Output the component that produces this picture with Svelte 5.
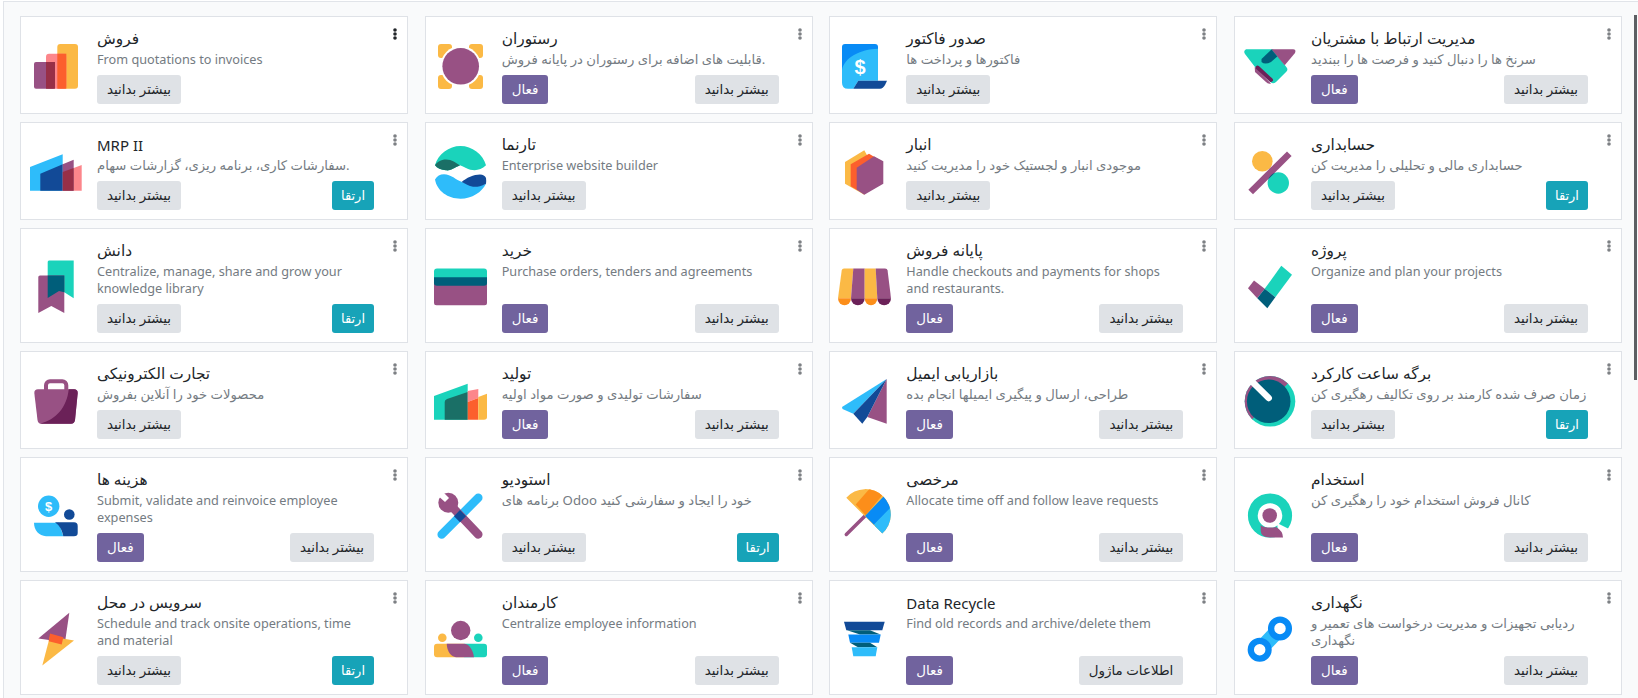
<script>
  const M = { t: 'بیشتر بدانید', k: 'more' };
  const A = { t: 'فعال', k: 'active' };
  const U = { t: 'ارتقا', k: 'up' };
  const I = { t: 'اطلاعات ماژول', k: 'more' };
  const apps = [
    { i: 'sales', n: 'فروش', d: 'From quotations to invoices', b: [M], hot: true },
    { i: 'rest', n: 'رستوران', d: 'قابلیت های اضافه برای رستوران در پایانه فروش.', b: [A, M] },
    { i: 'inv', n: 'صدور فاکتور', d: 'فاکتورها و پرداخت ها', b: [M] },
    { i: 'crm', n: 'مدیریت ارتباط با مشتریان', d: 'سرنخ ها را دنبال کنید و فرصت ها را ببندید', b: [A, M] },
    { i: 'mrp2', n: 'MRP II', d: 'سفارشات کاری، برنامه ریزی، گزارشات سهام.', b: [M, U] },
    { i: 'web', n: 'تارنما', d: 'Enterprise website builder', b: [M] },
    { i: 'stock', n: 'انبار', d: 'موجودی انبار و لجستیک خود را مدیریت کنید', b: [M] },
    { i: 'acc', n: 'حسابداری', d: 'حسابداری مالی و تحلیلی را مدیریت کن', b: [M, U] },
    { i: 'know', n: 'دانش', d: 'Centralize, manage, share and grow your knowledge library', b: [M, U] },
    { i: 'buy', n: 'خرید', d: 'Purchase orders, tenders and agreements', b: [A, M] },
    { i: 'pos', n: 'پایانه فروش', d: 'Handle checkouts and payments for shops and restaurants.', b: [A, M] },
    { i: 'proj', n: 'پروژه', d: 'Organize and plan your projects', b: [A, M] },
    { i: 'shop', n: 'تجارت الکترونیکی', d: 'محصولات خود را آنلاین بفروش', b: [M] },
    { i: 'mrp', n: 'تولید', d: 'سفارشات تولیدی و صورت مواد اولیه', b: [A, M] },
    { i: 'mail', n: 'بازاریابی ایمیل', d: 'طراحی، ارسال و پیگیری ایمیلها انجام بده', b: [A, M] },
    { i: 'time', n: 'برگه ساعت کارکرد', d: 'زمان صرف شده کارمند بر روی تکالیف رهگیری کن', b: [M, U] },
    { i: 'exp', n: 'هزینه ها', d: 'Submit, validate and reinvoice employee expenses', b: [A, M] },
    { i: 'studio', n: 'استودیو', d: 'برنامه های Odoo خود را ایجاد و سفارشی کنید', b: [M, U] },
    { i: 'off', n: 'مرخصی', d: 'Allocate time off and follow leave requests', b: [A, M] },
    { i: 'hire', n: 'استخدام', d: 'کانال فروش استخدام خود را رهگیری کن', b: [A, M] },
    { i: 'field', n: 'سرویس در محل', d: 'Schedule and track onsite operations, time and material', b: [M, U] },
    { i: 'emp', n: 'کارمندان', d: 'Centralize employee information', b: [A, M] },
    { i: 'recycle', n: 'Data Recycle', d: 'Find old records and archive/delete them', b: [A, I] },
    { i: 'maint', n: 'نگهداری', d: 'ردیابی تجهیزات و مدیریت درخواست های تعمیر و نگهداری', b: [A, M] }
  ];
  const fa = (s) => /[\u0600-\u06FF]/.test(s);
</script>

<div class="page">
  <div class="grid">
    {#each apps as a}
      <article class="card">
        <svg class="logo" viewBox="0 0 70 70" width="70" height="70">
          {#if a.i === 'sales'}
            <rect x="36.3" y="12" width="20.7" height="44.7" rx="3" fill="#FBB945" />
            <rect x="25" y="21.7" width="20.3" height="35" rx="3" fill="#FC868B" />
            <rect x="36.3" y="21.7" width="9" height="35" fill="#FC5F2D" />
            <rect x="13" y="30" width="21" height="26.7" rx="2" fill="#985184" />
            <rect x="25" y="30" width="9" height="26.7" fill="#982F47" />
          {:else if a.i === 'rest'}
            <rect x="12" y="12" width="14" height="14" rx="3" fill="#FBB945" />
            <rect x="43" y="12" width="14" height="14" rx="3" fill="#FBB945" />
            <rect x="12" y="43" width="14" height="14" rx="3" fill="#FBB945" />
            <rect x="43" y="43" width="14" height="14" rx="3" fill="#FBB945" />
            <circle cx="34.7" cy="34.3" r="20.3" fill="#fff" />
            <circle cx="34.7" cy="34.3" r="18.3" fill="#985184" />
          {:else if a.i === 'inv'}
            <rect x="12" y="12" width="36" height="30" rx="3" fill="#088BF5" />
            <path d="M12 38C14 26 30 17 48 16.7V48.7H28.3L23.3 56.7H18Q12 56.7 12 50.7Z" fill="#2EBCFA" />
            <path d="M28.3 48.7H57L55 53Q53 56.7 50 56.7H23.3Z" fill="#124A97" />
            <text x="30" y="41.8" class="dollar" font-size="20">$</text>
          {:else if a.i === 'crm'}
            <path d="M11 17.3H38L52 36Q53 38 51.5 39.5L41 50Q38 52.5 35.5 50L20 35L10 22Q8 19 11 17.3Z" fill="#1AD3BB" />
            <path d="M36.3 17.3H58Q61.5 17.3 60 21L49.7 33.3Z" fill="#985184" />
            <path d="M26.5 27L36.5 17.5L42.3 24.5L36 30Q30 33 26.5 30Z" fill="#005E7A" />
            <path d="M19.7 35L36 51.5Q33 52.5 31 50L20 40Z" fill="#985184" />
            <path d="M22.5 35.5L36 48" stroke="#6B2158" stroke-width="4" stroke-linecap="round" />
          {:else if a.i === 'mrp2'}
            <path d="M9 29L41.7 16.3V52.7H9Z" fill="#2EBCFA" />
            <path d="M19.3 35.7L41.7 26.3V52.7H19.3Z" fill="#124A97" />
            <path d="M41.7 26.3L52.7 21.7V52.7H41.7Z" fill="#985184" />
            <path d="M52.7 30L60.7 27V52.7H52.7Z" fill="#FC868B" />
            <path d="M41.7 34L52.7 30V52.7H41.7Z" fill="#982F47" />
          {:else if a.i === 'web'}
            <path d="M9 27.3C12 16 23 8 34.5 8C46 8 57 16 60 27.3C54 33 47 33.5 40 30C37 28.5 35.5 28 34 27.3C28 30 24 33 20 32.3C15 32 11 30 9 27.3Z" fill="#1AD3BB" />
            <path d="M9 27.3C11 24 15 21.5 20 21.5C26 21.5 30 25 34 27.3C28 30 24 33 20 32.3C15 32 11 30 9 27.3Z" fill="#1A6F66" />
            <path d="M9 41.5C11 38 14 36.3 18 36.3C25 36.3 30 42 36 44C42 46 50 49 60 45.7C56 54 46 60.7 34.5 60.7C22 60.7 11 53 9 41.5Z" fill="#2EBCFA" />
            <path d="M35.7 44C40 40 48 36.5 54 36.5C57 36.5 59 38 60 40C60.3 42 60.3 44 60 45.7C54 49 50 49 47 48.7C43 48 39 45.5 35.7 44Z" fill="#124A97" />
          {:else if a.i === 'stock'}
            <path d="M34.3 12.3L15 24V45.7L34.3 56.7L44 30Z" fill="#FBB945" />
            <path d="M20.7 26.3L39 15.7L53 24L26.7 51.7L20.7 48.3Z" fill="#FC5F2D" />
            <path d="M44 18.3L53.3 23.3V45.7L34.3 56.7L26.7 51.7V29.7Z" fill="#985184" />
          {:else if a.i === 'acc'}
            <defs><clipPath id="acc-bar"><path d="M13.4 51.7L52 13.4L56.6 18L18 56.3Z" /></clipPath></defs>
            <circle cx="27.3" cy="23.3" r="10.3" fill="#FBB945" />
            <circle cx="43.3" cy="45" r="10.7" fill="#1AD3BB" />
            <path d="M13.4 51.7L52 13.4L56.6 18L18 56.3Z" fill="#985184" />
            <circle cx="27.3" cy="23.3" r="10.3" fill="#982F47" clip-path="url(#acc-bar)" />
            <circle cx="43.3" cy="45" r="10.7" fill="#005E7A" clip-path="url(#acc-bar)" />
          {:else if a.i === 'know'}
            <path d="M28 8.5H52.7V46.2L43.3 40.3L26.7 46V10Q26.7 8.5 28 8.5Z" fill="#1AD3BB" />
            <path d="M19 23.5H43.3V61L30.3 54L17.3 61V25Q17.3 23.5 19 23.5Z" fill="#985184" />
            <path d="M26.7 23.5H43.3V40.3L38 39L26.7 46Z" fill="#005E7A" />
          {:else if a.i === 'buy'}
            <rect x="8" y="28" width="53" height="25.2" rx="2.5" fill="#985184" />
            <rect x="8" y="16.5" width="53" height="12" rx="3" fill="#1AD3BB" />
            <path d="M8 25.2H61V31Q61 33.8 58 33.8H11Q8 33.8 8 31Z" fill="#005E7A" />
          {:else if a.i === 'pos'}
            <path d="M14 16.5H23.3L21 46.2H8L11.7 18.5Q12 16.5 14 16.5Z" fill="#FBB945" />
            <path d="M23.3 16.5H34.7V46.2H21Z" fill="#985184" />
            <path d="M34.7 16.5H45.7L47.3 46.2H34.7Z" fill="#FBB945" />
            <path d="M45.7 16.5H55Q57.3 16.5 57.6 18.5L61 46.2H47.3Z" fill="#985184" />
            <path d="M8 46.2H21A6.5 7 0 0 1 8 46.2Z" fill="#FC8E1A" />
            <path d="M21 46.2H34.7A6.85 7 0 0 1 21 46.2Z" fill="#6B2158" />
            <path d="M34.7 46.2H47.3A6.3 7 0 0 1 34.7 46.2Z" fill="#FC8E1A" />
            <path d="M47.3 46.2H61A6.85 7 0 0 1 47.3 46.2Z" fill="#6B2158" />
          {:else if a.i === 'proj'}
            <path d="M29.7 36.8L46.3 13.8L57 22.8L40.3 45.2Z" fill="#1AD3BB" />
            <path d="M13 36.2L19 28.5L29.7 36.8L22.3 46.2Z" fill="#985184" />
            <path d="M29.7 36.8L40.3 45.2L32.3 56.2L22.3 46.2Z" fill="#005E7A" />
          {:else if a.i === 'shop'}
            <rect x="25" y="14.3" width="20.3" height="13" rx="4" fill="none" stroke="#985184" stroke-width="4" />
            <path d="M17 22.3H53Q56.7 22.3 56.7 26L54 53Q53.5 56.7 50 56.7H20Q17 56.7 16.5 53L13.3 26Q13.3 22.3 17 22.3Z" fill="#985184" />
            <path d="M47.7 22.3H53Q56.7 22.3 56.7 26L54 53Q53.5 56.7 50 56.7H19C35 53 46 40 47.7 22.3Z" fill="#6B2158" />
          {:else if a.i === 'mrp'}
            <path d="M8 29L41.7 16.7V52.7H8Z" fill="#1AD3BB" />
            <path d="M18.7 35Q18.7 33 21 32L41.7 25V52.7H18.7Z" fill="#1A6F66" />
            <path d="M41.7 24L52.3 22V31L41.7 35Z" fill="#FC868B" />
            <path d="M41.7 35L52.3 31V52.7H41.7Z" fill="#FC5F2D" />
            <path d="M52.3 30L61 26.7V50Q61 52.7 58 52.7H52.3Z" fill="#FBB945" />
          {:else if a.i === 'mail'}
            <path d="M12 40L56.7 12L23.3 46.7L12.5 42Z" fill="#2EBCFA" />
            <path d="M37.3 50L56.7 12V56.7Z" fill="#985184" />
            <path d="M23.3 46.7L56.7 12L37.3 50L32.3 56.7Z" fill="#124A97" />
          {:else if a.i === 'time'}
            <circle cx="35" cy="34.3" r="25.3" fill="#1AD3BB" />
            <path d="M52.9 16.4A25.3 25.3 0 0 0 17.1 52.2Z" fill="#985184" />
            <circle cx="33.7" cy="34.3" r="21.8" fill="#005E7A" />
            <path d="M19 16.5L33.7 31" stroke="#fff" stroke-width="6.5" stroke-linecap="round" />
          {:else if a.i === 'exp'}
            <circle cx="27.7" cy="25.2" r="10.7" fill="#2EBCFA" />
            <text x="27.7" y="30" class="dollar" font-size="13">$</text>
            <circle cx="48.3" cy="33.5" r="5.3" fill="#124A97" />
            <path d="M13 41.8H38L42.3 55.2H25C18 55.2 13 49 13 41.8Z" fill="#2EBCFA" />
            <path d="M34 41.3H53Q56.7 41.3 56.7 45V52Q56.7 55.2 53 55.2H42.3C41 49 39 45 34 41.3Z" fill="#124A97" />
          {:else if a.i === 'studio'}
            <path d="M15.7 53.5L52.3 16.8" stroke="#2EBCFA" stroke-width="8.5" stroke-linecap="round" />
            <path d="M52.3 53.5L22.3 21.8" stroke="#985184" stroke-width="8.5" stroke-linecap="round" />
            <circle cx="22.3" cy="21.8" r="10" fill="#985184" />
            <path d="M14.5 8.5L23 17L19 21L10 13Z" fill="#fff" />
            <path d="M34 29L40 35.2L34 41.2L28 35.2Z" fill="#124A97" />
          {:else if a.i === 'off'}
            <defs><clipPath id="off-can"><path d="M16.3 16.8A25.4 25.4 0 1 1 52.3 52.5Z" /></clipPath></defs>
            <path d="M16.3 53.5L35.7 34.2" stroke="#985184" stroke-width="3.5" stroke-linecap="round" />
            <g clip-path="url(#off-can)">
              <rect x="10" y="5" width="55" height="55" fill="#FBB945" />
              <path d="M25.7 23.5L42 5H60L35.7 34.2Z" fill="#FC8E1A" />
              <path d="M35 35L55 14L64 24L44 44Z" fill="#088BF5" />
              <path d="M44 43.5L62 25L70 40L52 60Z" fill="#2EBCFA" />
            </g>
          {:else if a.i === 'hire'}
            <circle cx="35" cy="34.5" r="17.2" fill="none" stroke="#1AD3BB" stroke-width="9.8" />
            <path d="M42 42L58 50L50 60L44 58Z" fill="#fff" />
            <circle cx="34.7" cy="34.5" r="7.3" fill="#985184" />
            <path d="M25.7 44C28 47 38 47 41 46Q48 50 48 56.5H35Q26 56 25.7 50Z" fill="#985184" />
          {:else if a.i === 'field'}
            <path d="M48.3 8.8L17.3 34.5L44 38.2Z" fill="#985184" />
            <path d="M53 36.5L21.3 61.5L29 32.2Z" fill="#FBB945" />
            <path d="M29 29.5L42.3 33.2L40.7 40.5L27.7 37.2Z" fill="#FC5F2D" />
          {:else if a.i === 'emp'}
            <circle cx="34.7" cy="26.5" r="9.7" fill="#985184" />
            <circle cx="16.3" cy="33.8" r="4.3" fill="#FBB945" />
            <circle cx="52.3" cy="33.8" r="4.3" fill="#1AD3BB" />
            <path d="M11 39.8H38V53.2H11Q8 53.2 8 50.2V42.8Q8 39.8 11 39.8Z" fill="#FBB945" />
            <path d="M38 39.8H58Q61 39.8 61 42.8V50.2Q61 53.2 58 53.2H38Z" fill="#1AD3BB" />
            <path d="M20.7 39.8H38C43 39.8 47 46 48 53.2H30C25 53.2 21 47 20.7 39.8Z" fill="#985184" />
          {:else if a.i === 'recycle'}
            <path d="M14 17.8H54.7L52.3 26.2H16.3Z" fill="#124A97" />
            <path d="M17 26.2H40L50.5 30.5H30Z" fill="#005E7A" />
            <path d="M18.3 30.5H50.7L49 38.8H20Z" fill="#088BF5" />
            <path d="M20 38.8H40L47.3 43.2H28Z" fill="#005E7A" />
            <path d="M21.7 43.2H47.3L45.7 52.2H23.3Z" fill="#2EBCFA" />
          {:else if a.i === 'maint'}
            <path d="M24.7 45.8L45 24.5" stroke="#2EBCFA" stroke-width="15" />
            <circle cx="45" cy="24.5" r="8.9" fill="#fff" stroke="#088BF5" stroke-width="6.3" />
            <circle cx="24.7" cy="45.8" r="8.9" fill="#fff" stroke="#088BF5" stroke-width="6.3" />
          {/if}
        </svg>
        <div class="body">
          <h4 class:fa={fa(a.n)}>{a.n}</h4>
          <p class:fa={fa(a.d)}>{a.d}</p>
          <div class="actions">
            {#each a.b as b}
              <button class={b.k}>{b.t}</button>
            {/each}
          </div>
        </div>
        <svg class="kebab" class:hot={a.hot} viewBox="0 0 4 12" width="4" height="12">
          <circle cx="2" cy="2" r="1.8" /><circle cx="2" cy="6" r="1.8" /><circle cx="2" cy="10" r="1.8" />
        </svg>
      </article>
    {/each}
  </div>
  <div class="thumb"></div>
</div>

<style>
  :global(body) { background: #fff; overflow: hidden; }
  .page {
    position: relative;
    box-sizing: border-box;
    height: 697px;
    margin: 1px 0 0 3px;
    padding: 14px 0 0 16px;
    border-top: 1px solid #e1e4e9;
    border-left: 1px solid #e1e4e9;
    background: #f9fafb;
    overflow: hidden;
  }
  .grid {
    display: grid;
    grid-template-columns: repeat(4, 388px);
    column-gap: 16.67px;
    row-gap: 8px;
    align-items: stretch;
  }
  .card {
    position: relative;
    display: flex;
    align-items: center;
    box-sizing: border-box;
    padding: 12px 33px 9px 0;
    background: #fff;
    border: 1px solid #dfe2e7;
    font-family: "Noto Sans", "DejaVu Sans", sans-serif;
  }
  .logo { flex: 0 0 70px; margin-right: 6px; }
  .body {
    flex: 1;
    min-width: 0;
    align-self: stretch;
    display: flex;
    flex-direction: column;
  }
  h4 {
    margin: 0 0 2px;
    font-size: 15px;
    line-height: 20px;
    font-weight: 400;
    color: #212529;
  }
  h4.fa { font-size: 15.4px; }
  p {
    margin: 0 0 7px;
    font-size: 12.7px;
    line-height: 17px;
    color: #747b82;
  }
  p.fa { font-size: 13.2px; }
  .actions {
    margin-top: auto;
    display: flex;
    justify-content: space-between;
  }
  button {
    height: 29px;
    padding: 0 10px;
    border: 0;
    border-radius: 3px;
    font: inherit;
    font-size: 13.4px;
    line-height: 29px;
    white-space: nowrap;
  }
  .more { background: #dfe2e6; color: #212529; }
  .active { background: #71639e; color: #fff; }
  .up { background: #17a3b8; color: #fff; font-size: 13px; padding: 0 9px; }
  .dollar {
    fill: #fff;
    font-family: "Liberation Sans", sans-serif;
    font-weight: 700;
    text-anchor: middle;
  }
  .kebab { position: absolute; top: 11px; right: 10px; fill: #7d8084; }
  .kebab.hot { fill: #212529; }
  .thumb {
    position: absolute;
    left: 1630px;
    top: 13px;
    width: 3px;
    height: 365px;
    background: #5c5f63;
  }
</style>
